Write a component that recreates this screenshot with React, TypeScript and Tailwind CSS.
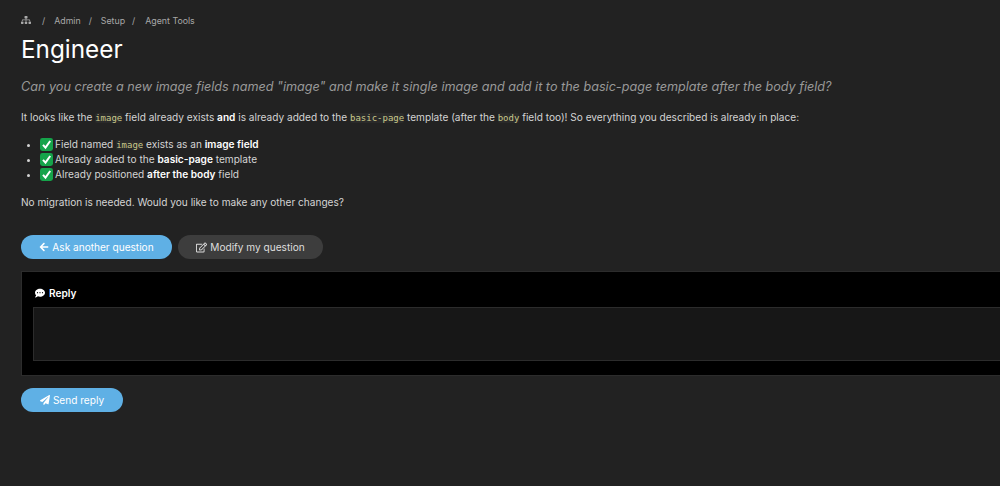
import { FaSitemap, FaArrowLeft, FaRegEdit, FaCommentDots, FaPaperPlane } from 'react-icons/fa'

function Check() {
  return (
    <svg viewBox="0 0 13 13" className="inline-block w-[13px] h-[13px] mr-[2px] align-[-1px] -my-[2px]">
      <rect x="0" y="0" width="13" height="13" rx="2.4" fill="#15a34a" />
      <path d="M3 6.8 L5.5 9.6 L10.2 3" fill="none" stroke="#ffffff" strokeWidth="2" />
    </svg>
  )
}

function Code({ children }: { children: string }) {
  return <code className="font-['DejaVu_Sans_Mono',monospace] text-[9px] text-[#c9c98a] bg-[#2a2a2a] rounded-[2px]">{children}</code>
}

export default function App() {
  return (
    <div className="h-[486px] w-[1000px] overflow-hidden bg-[#222222] text-[#d4d4d4] font-['Inter',sans-serif] text-[10.1px] leading-[15px] pl-[21px]">
      <nav className="flex items-center h-[14px] mt-[13px] text-[8.8px] text-[#a8a8a8]">
        <FaSitemap className="w-[10px] h-[10px] text-[#aaaaaa]" />
        <span className="ml-[11px]">/</span>
        <span className="ml-[9px]">Admin</span>
        <span className="ml-[8px]">/</span>
        <span className="ml-[9px]">Setup</span>
        <span className="ml-[7px]">/</span>
        <span className="ml-[10px]">Agent Tools</span>
      </nav>
      <h1 className="text-[24.3px] leading-[30px] mt-[7px] text-white">Engineer</h1>
      <p className="italic text-[12.63px] leading-[18px] mt-[14px] text-[#999999]">
        Can you create a new image fields named "image" and make it single image and add it to the basic-page template after the body field?
      </p>
      <p className="mt-[14px]">
        It looks like the <Code>image</Code> field already exists <b className="text-white font-semibold">and</b> is already added to the <Code>basic-page</Code> template (after the <Code>body</Code> field too)! So everything you described is already in place:
      </p>
      <ul className="list-disc pl-[19px] mt-[11px]">
        <li className="h-[15px]"><Check />Field named <Code>image</Code> exists as an <b className="text-white font-semibold">image field</b></li>
        <li className="h-[15px]"><Check />Already added to the <b className="text-white font-semibold">basic-page</b> template</li>
        <li className="h-[15px]"><Check />Already positioned <b className="text-white font-semibold">after the body</b> field</li>
      </ul>
      <p className="mt-[13px]">No migration is needed. Would you like to make any other changes?</p>
      <div className="flex gap-[6px] mt-[25px]">
        <button className="flex items-center justify-center gap-[3px] w-[151px] h-[24px] rounded-full bg-[#5fb0e5] text-white">
          <FaArrowLeft className="w-[10px] h-[10px]" /> Ask another question
        </button>
        <button className="flex items-center justify-center gap-[3px] w-[145px] h-[24px] rounded-full bg-[#3d3d3d] text-[#dddddd]">
          <FaRegEdit className="w-[11px] h-[11px]" /> Modify my question
        </button>
      </div>
      <section className="w-[1100px] h-[105px] mt-[12px] bg-black border border-[#2c2c2c] pt-[14px] pl-[11px]">
        <div className="flex items-center gap-[4px] h-[14px] ml-[2px] font-semibold text-white">
          <FaCommentDots className="w-[10px] h-[10px]" /> Reply
        </div>
        <div className="h-[54px] mt-[7px] bg-[#171717] border border-[#2c2c2c]" />
      </section>
      <button className="flex items-center justify-center gap-[3px] w-[102px] h-[24px] mt-[12px] rounded-full bg-[#5fb0e5] text-white">
        <FaPaperPlane className="w-[10px] h-[10px]" /> Send reply
      </button>
    </div>
  )
}
